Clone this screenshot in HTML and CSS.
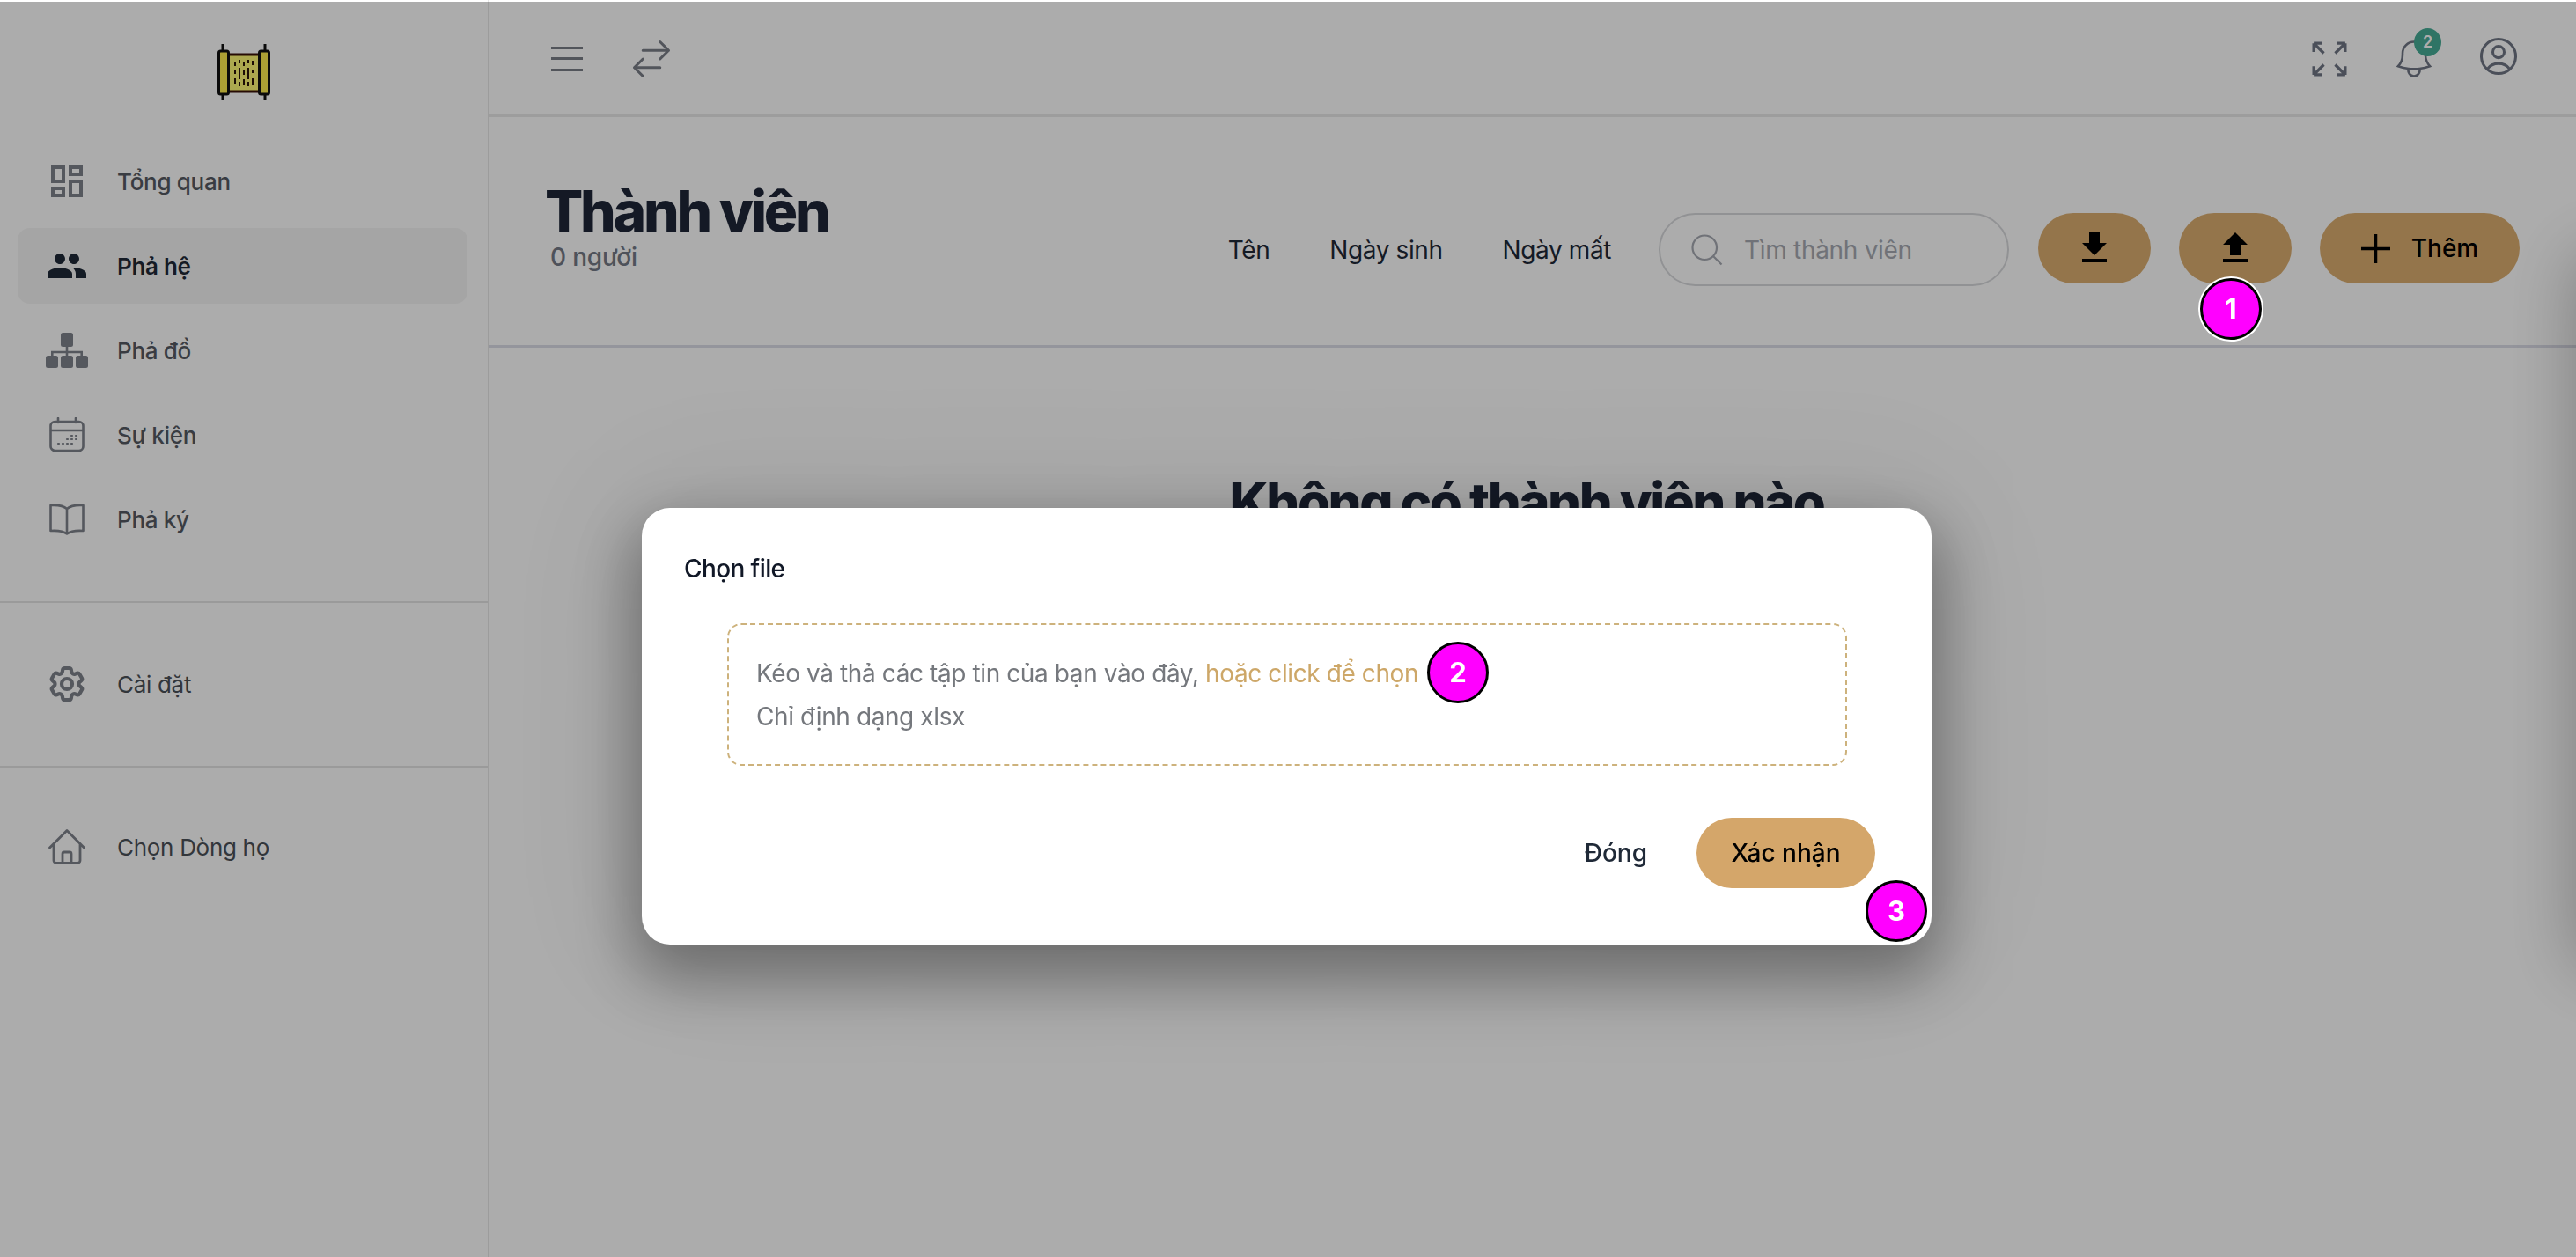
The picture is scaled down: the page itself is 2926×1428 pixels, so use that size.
FILE: index.html
```html
<!DOCTYPE html>
<html lang="vi">
<head>
  <meta charset="UTF-8" />
  <title>Thành viên</title>
  <link rel="stylesheet" href="styles.css">
</head>
<body>

  <div class="app">
    <aside class="sidebar">
      <div class="logo">
        <svg width="60" height="66" viewBox="0 0 60 66">
          <rect x="10" y="12" width="40" height="42" fill="#fffa75" stroke="#3a1208" stroke-width="3"/>
          <g fill="#2a1408">
            <rect x="19" y="20" width="2" height="5"/><rect x="24" y="18" width="2" height="4"/><rect x="29" y="20" width="2" height="5"/><rect x="34" y="18" width="2" height="4"/><rect x="39" y="19" width="2" height="5"/>
            <rect x="19" y="30" width="2" height="4"/><rect x="24" y="27" width="2" height="13"/><rect x="29" y="30" width="2" height="5"/><rect x="34" y="27" width="2" height="13"/><rect x="39" y="29" width="2" height="4"/>
            <rect x="19" y="39" width="2" height="6"/><rect x="24" y="43" width="2" height="5"/><rect x="29" y="40" width="2" height="7"/><rect x="34" y="43" width="2" height="5"/><rect x="39" y="39" width="2" height="7"/>
          </g>
          <path d="M6 0v8M54 0v8M6 56v8M54 56v8" stroke="#111" stroke-width="3"/>
          <rect x="1.5" y="8" width="11" height="49" rx="2" fill="#ffee4e" stroke="#111" stroke-width="3"/>
          <rect x="47.5" y="8" width="11" height="49" rx="2" fill="#ffee4e" stroke="#111" stroke-width="3"/>
        </svg>
      </div>

      <nav class="nav">
        <a class="nav-item">
          <span class="nav-icon"><svg width="48" height="48" viewBox="0 0 24 24" fill="currentColor"><path d="M19 5v2h-4V5h4M9 5v6H5V5h4m10 8v6h-4v-6h4M9 17v2H5v-2h4M21 3h-8v6h8V3zM11 3H3v10h8V3zm10 8h-8v10h8V11zm-10 4H3v6h8v-6z"/></svg></span>
          Tổng quan
        </a>
        <a class="nav-item active">
          <span class="nav-icon"><svg width="48" height="48" viewBox="0 0 24 24" fill="currentColor"><path d="M16 11c1.66 0 2.99-1.34 2.99-3S17.66 5 16 5c-1.66 0-3 1.34-3 3s1.34 3 3 3zm-8 0c1.66 0 2.99-1.34 2.99-3S9.66 5 8 5C6.34 5 5 6.34 5 8s1.34 3 3 3zm0 2c-2.33 0-7 1.17-7 3.5V19h14v-2.5c0-2.33-4.67-3.5-7-3.5zm8 0c-.29 0-.62.02-.97.05 1.16.84 1.97 1.97 1.97 3.45V19h6v-2.5c0-2.33-4.67-3.5-7-3.5z"/></svg></span>
          Phả hệ
        </a>
        <a class="nav-item">
          <span class="nav-icon"><svg width="48" height="40" viewBox="0 0 48 40" fill="currentColor"><rect x="17" y="0" width="14" height="16" rx="2.5"/><rect x="0" y="26" width="14" height="14" rx="2.5"/><rect x="17" y="26" width="14" height="14" rx="2.5"/><rect x="34" y="26" width="14" height="14" rx="2.5"/><path d="M22.7 16h2.6v4.7H42V26h-2.6v-2.7H25.3V26h-2.6v-2.7H8.6V26H6v-5.3h16.7z"/></svg></span>
          Phả đồ
        </a>
        <a class="nav-item">
          <span class="nav-icon"><svg width="40" height="40" viewBox="0 0 40 40" fill="none" stroke="currentColor" stroke-width="2.6" stroke-linecap="round"><rect x="1.5" y="5" width="37" height="33" rx="5"/><path d="M2 15h36M10 1v5M30 1v5"/><path d="M10 30h1M15 30h1M20 30h1M25 30h1M20 25h1M25 25h1M30 25h1M25 21h1M30 21h1" stroke-width="2.2"/></svg></span>
          Sự kiện
        </a>
        <a class="nav-item">
          <span class="nav-icon"><svg width="40" height="36" viewBox="0 0 40 36" fill="none" stroke="currentColor" stroke-width="2.6" stroke-linejoin="round"><path d="M20 6C16 2.500 9 1.500 1.500 2v29c7-.5 14 0 18.500 3.500 4.500-3.500 11.500-4 18.500-3.500V2C31 1.500 24 2.500 20 6zM20 6v28"/></svg></span>
          Phả ký
        </a>
      </nav>

      <div class="side-divider"></div>
      <nav class="nav nav-small">
        <a class="nav-item">
          <span class="nav-icon"><svg width="50" height="50" viewBox="0 0 24 24" fill="none" stroke="currentColor" stroke-width="2.1"><path d="M9.594 3.94c.09-.542.56-.94 1.11-.94h2.593c.55 0 1.02.398 1.11.94l.213 1.281c.063.374.313.686.645.87.074.04.147.083.22.127.324.196.72.257 1.075.124l1.217-.456a1.125 1.125 0 011.37.49l1.296 2.247a1.125 1.125 0 01-.26 1.431l-1.003.827c-.293.24-.438.613-.431.992a6.759 6.759 0 010 .255c-.007.378.138.75.43.99l1.005.828c.424.35.534.954.26 1.43l-1.298 2.247a1.125 1.125 0 01-1.369.491l-1.217-.456c-.355-.133-.75-.072-1.076.124a6.57 6.57 0 01-.22.128c-.331.183-.581.495-.644.869l-.213 1.28c-.09.543-.56.941-1.11.941h-2.594c-.55 0-1.02-.398-1.11-.94l-.213-1.281c-.062-.374-.312-.686-.644-.87a6.52 6.52 0 01-.22-.127c-.325-.196-.72-.257-1.076-.124l-1.217.456a1.125 1.125 0 01-1.369-.49l-1.297-2.247a1.125 1.125 0 01.26-1.431l1.004-.827c.292-.24.437-.613.43-.992a6.932 6.932 0 010-.255c.007-.378-.138-.75-.43-.99l-1.004-.828a1.125 1.125 0 01-.26-1.43l1.297-2.247a1.125 1.125 0 011.37-.491l1.216.456c.356.133.751.072 1.076-.124.072-.044.146-.087.22-.128.332-.183.582-.495.644-.869l.214-1.281z"/><path d="M15 12a3 3 0 11-6 0 3 3 0 016 0z"/></svg></span>
          <span class="nav-light">Cài đặt</span>
        </a>
      </nav>
      <div class="side-divider"></div>
      <nav class="nav nav-small nav-last">
        <a class="nav-item">
          <span class="nav-icon"><svg width="42" height="40" viewBox="0 0 42 40" fill="none" stroke="currentColor" stroke-width="2.8" stroke-linecap="round" stroke-linejoin="round"><path d="M1.500 21L21 1.500 40.500 21M6 17v18.500a3 3 0 003 3h24a3 3 0 003-3V17M16 38V28a2 2 0 012-2h6a2 2 0 012 2v10"/></svg></span>
          <span class="nav-light">Chọn Dòng họ</span>
        </a>
      </nav>
    </aside>

    <main class="main">
      <header class="topbar">
        <div class="topbar-left">
          <div class="menu-icon"><span></span><span></span><span></span></div>
          <svg class="swap-icon" width="52" height="52" viewBox="0 0 24 24" fill="none" stroke="currentColor" stroke-width="1.4" stroke-linecap="round" stroke-linejoin="round"><path d="M7.500 21L3 16.500m0 0L7.500 12M3 16.500h13.500m0-13.500L21 7.500m0 0L16.500 12M21 7.500H7.500"/></svg>
        </div>
        <div class="topbar-right">
          <svg width="52" height="52" viewBox="0 0 24 24" fill="none" stroke="currentColor" stroke-width="1.5"><path d="M3.750 3.750v4.500m0-4.500h4.500m-4.500 0L9 9M3.750 20.250v-4.500m0 4.500h4.500m-4.500 0L9 15M20.250 3.750h-4.500m4.500 0v4.500m0-4.500L15 9m5.250 11.250h-4.500m4.500 0v-4.500m0 4.500L15 15"/></svg>
          <div class="bell">
            <svg width="52" height="52" viewBox="0 0 24 24" fill="none" stroke="currentColor" stroke-width="1.2"><path d="M14.857 17.082a23.848 23.848 0 005.454-1.31A8.967 8.967 0 0118 9.750v-.7V9A6 6 0 006 9v.750a8.967 8.967 0 01-2.312 6.022c1.733.64 3.56 1.085 5.455 1.31m5.714 0a24.255 24.255 0 01-5.714 0m5.714 0a3 3 0 11-5.714 0"/></svg>
            <span class="badge">2</span>
          </div>
          <svg class="user-icon" width="52" height="52" viewBox="0 0 24 24" fill="none" stroke="currentColor" stroke-width="1.4"><path d="M17.982 18.725A7.488 7.488 0 0012 15.750a7.488 7.488 0 00-5.982 2.975m11.964 0a9 9 0 10-11.963 0m11.963 0A8.966 8.966 0 0112 21a8.966 8.966 0 01-5.982-2.275M15 9.750a3 3 0 11-6 0 3 3 0 016 0z"/></svg>
        </div>
      </header>

      <section class="page-head">
        <div class="page-title">
          <h1>Thành viên</h1>
          <p>0 người</p>
        </div>
        <div class="tools">
          <div class="filters">
            <span>Tên</span>
            <span>Ngày sinh</span>
            <span>Ngày mất</span>
          </div>
          <div class="search">
            <svg width="44" height="44" viewBox="0 0 24 24" fill="none" stroke="currentColor" stroke-width="1.2"><path d="M21 21l-5.197-5.197m0 0A7.500 7.500 0 105.196 5.196a7.500 7.500 0 0010.607 10.607z"/></svg>
            <span>Tìm thành viên</span>
          </div>
          <button class="pill icon-pill"><svg width="48" height="48" viewBox="0 0 24 24" fill="currentColor"><path d="M19 9h-4V3H9v6H5l7 7 7-7zM5 18v2h14v-2H5z"/></svg></button>
          <button class="pill icon-pill"><svg width="48" height="48" viewBox="0 0 24 24" fill="currentColor"><path d="M9 16h6v-6h4l-7-7-7 7h4zm-4 2h14v2H5z"/></svg></button>
          <button class="pill add-pill"><svg width="33" height="33" viewBox="0 0 33 33" stroke="currentColor" stroke-width="3.500"><path d="M16.500 0v33M0 16.500h33"/></svg>Thêm</button>
        </div>
      </section>

      <section class="empty">
        <h2>Không có thành viên nào</h2>
      </section>
    </main>
  </div>

  <div class="overlay">
    <div class="modal">
      <div class="modal-title">Chọn file</div>
      <div class="dropzone">
        <p>Kéo và thả các tập tin của bạn vào đây, <span class="link">hoặc click để chọn</span></p>
        <p>Chỉ định dạng xlsx</p>
      </div>
      <div class="modal-actions">
        <button class="btn-close">Đóng</button>
        <button class="btn-ok">Xác nhận</button>
      </div>
    </div>
  </div>
  <div class="side-shadow"></div>

  <span class="marker marker-1">1</span>
  <span class="marker marker-2">2</span>
  <span class="marker marker-3">3</span>

</body>
</html>
```

FILE: styles.css
```css
* {
  box-sizing: border-box;
}

body {
  margin: 0;
  height: 100vh;
  overflow: hidden;
  background: #fff;
  font-family: Inter, "Noto Sans", sans-serif;
  font-size: 28px;
  letter-spacing: -0.4px;
  color: #1f2937;
}

.app {
  display: flex;
  height: 100vh;
}

/* Sidebar */
.sidebar {
  width: 556px;
  flex: none;
  border-right: 2px solid #e8e8e8;
}

.logo {
  display: flex;
  justify-content: center;
  height: 163px;
  padding-top: 50px;
}

.nav {
  display: flex;
  flex-direction: column;
  gap: 10px;
  padding: 0 23px 0 20px;
}

.nav-small {
  padding-top: 49px;
  padding-bottom: 0;
}

.nav-last {
  padding-top: 47px;
}

.nav-item {
  display: flex;
  align-items: center;
  gap: 33px;
  height: 86px;
  padding-left: 32px;
  border-radius: 14px;
  font-size: 26px;
  font-weight: 500;
  letter-spacing: -0.3px;
  color: #555a63;
}

.nav-item.active {
  background: #f5f5f5;
  color: #1f2937;
  font-weight: 600;
}

.nav-icon {
  display: flex;
  align-items: center;
  justify-content: center;
  width: 48px;
  color: #7f838c;
}

.active .nav-icon {
  color: #1f2937;
}

.nav-light {
  font-weight: 400;
  color: #4b5058;
}

.side-divider {
  height: 2px;
  margin-top: 50px;
  background: #e4e4e4;
}

/* Top bar */
.main {
  flex: 1;
  display: flex;
  flex-direction: column;
  min-width: 0;
}

.topbar {
  display: flex;
  align-items: center;
  justify-content: space-between;
  height: 133px;
  padding: 3px 62px 0 70px;
  border-bottom: 3px solid #e9e9e9;
  color: #7a7e88;
}

.topbar-left,
.topbar-right {
  display: flex;
  align-items: center;
}

.topbar-left {
  gap: 52px;
}

.topbar-right {
  gap: 44px;
  color: #6f7685;
}

.menu-icon {
  display: flex;
  flex-direction: column;
  gap: 9.500px;
  width: 36px;
}

.menu-icon span {
  height: 3px;
  background: #7a7e88;
}

.bell {
  position: relative;
  display: flex;
}

.badge {
  position: absolute;
  top: -9px;
  left: 26px;
  width: 31px;
  height: 32px;
  border-radius: 50%;
  background: #46ac96;
  color: #fff;
  font-size: 18px;
  font-weight: 600;
  letter-spacing: 0;
  line-height: 32px;
  text-align: center;
}

.user-icon {
  margin-bottom: 6px;
}

/* Page head */
.page-head {
  display: flex;
  justify-content: space-between;
  height: 262px;
  padding: 78px 64px 0 64px;
  border-bottom: 3px solid #dcdde8;
}

.page-title h1 {
  margin: -1px 0 0 -1px;
  font-size: 64px;
  font-weight: 800;
  line-height: 60px;
  letter-spacing: -0.05em;
  color: #1e2638;
}

.page-title p {
  margin: 5px 0 0 5px;
  font-size: 28px;
  font-weight: 500;
  line-height: 34px;
  letter-spacing: -0.2px;
  color: #747a87;
}

.tools {
  display: flex;
  align-items: flex-start;
  gap: 32px;
  padding-top: 31px;
}

.filters {
  display: flex;
  align-items: center;
  gap: 68px;
  height: 83px;
  margin-right: 22px;
  color: #1f2937;
}

.search {
  display: flex;
  align-items: center;
  gap: 20px;
  width: 398px;
  height: 83px;
  margin-right: 1px;
  padding-left: 31px;
  border: 2px solid #d8d9dc;
  border-radius: 42px;
  letter-spacing: -0.3px;
  color: #a6aab2;
}

.pill {
  display: flex;
  align-items: center;
  justify-content: center;
  height: 80px;
  border: 0;
  border-radius: 40px;
  background: #dcae70;
  color: #000;
  font-family: inherit;
  font-size: 28px;
  font-weight: 500;
}

.icon-pill {
  width: 128px;
  padding: 0;
}

.add-pill {
  gap: 24px;
  width: 227px;
}

/* Empty state, mostly behind the dialog */
.empty {
  flex: 1;
  padding: 145px 14px 0 0;
  text-align: center;
}

.empty h2 {
  margin: 0;
  font-size: 60px;
  font-weight: 800;
  line-height: 60px;
  letter-spacing: -0.042em;
  color: #1e2638;
}

/* Dialog */
.overlay {
  position: fixed;
  top: 2px;
  right: 0;
  bottom: 0;
  left: 0;
  display: flex;
  justify-content: center;
  align-items: flex-start;
  padding: 575px 3px 0 0;
  background: rgba(0, 0, 0, 0.325);
}

.modal {
  display: flex;
  flex-direction: column;
  width: 1465px;
  height: 496px;
  border-radius: 32px;
  background: #fff;
  box-shadow: 0 30px 70px 10px rgba(0, 0, 0, 0.35), 0 0 160px 40px rgba(0, 0, 0, 0.07);
}

.modal-title {
  padding: 52px 48px 0;
  line-height: 34px;
  letter-spacing: -0.6px;
  font-weight: 500;
  color: #111827;
}

.dropzone {
  display: flex;
  flex-direction: column;
  justify-content: center;
  height: 162px;
  margin: 45px 96px 0 97px;
  padding: 1px 0 0 31px;
  border: 2px dashed #cdb27c;
  border-radius: 16px;
  color: #75787d;
}

.dropzone p {
  margin: 0;
  line-height: 49px;
}

.link {
  color: #cda768;
}

.modal-actions {
  display: flex;
  justify-content: flex-end;
  align-items: center;
  gap: 56px;
  margin-top: 59px;
  padding-right: 64px;
}

.btn-close,
.btn-ok {
  border: 0;
  padding: 0;
  background: none;
  font-family: inherit;
  font-size: 28px;
  font-weight: 500;
}

.btn-close {
  color: #1f2937;
}

.btn-ok {
  width: 203px;
  height: 80px;
  border-radius: 40px;
  background: #d4a66a;
  color: #000;
}

/* Panel parked off the right edge, only its shadow shows */
.side-shadow {
  position: fixed;
  top: 290px;
  left: 100%;
  width: 100px;
  height: 810px;
  box-shadow: 0 0 80px rgba(0, 0, 0, 0.28);
}

/* Numbered callouts */
.marker {
  position: fixed;
  width: 70px;
  height: 70px;
  border: 3px solid #000;
  border-radius: 50%;
  background: #ff00ff;
  box-shadow: 0 0 0 2px #fff;
  color: #fff;
  font-size: 31px;
  font-weight: 700;
  letter-spacing: 0;
  line-height: 64px;
  text-align: center;
}

.marker-1 {
  top: 316px;
  left: 2499px;
}

.marker-2 {
  top: 729px;
  left: 1621px;
}

.marker-3 {
  top: 1000px;
  left: 2119px;
}
```
